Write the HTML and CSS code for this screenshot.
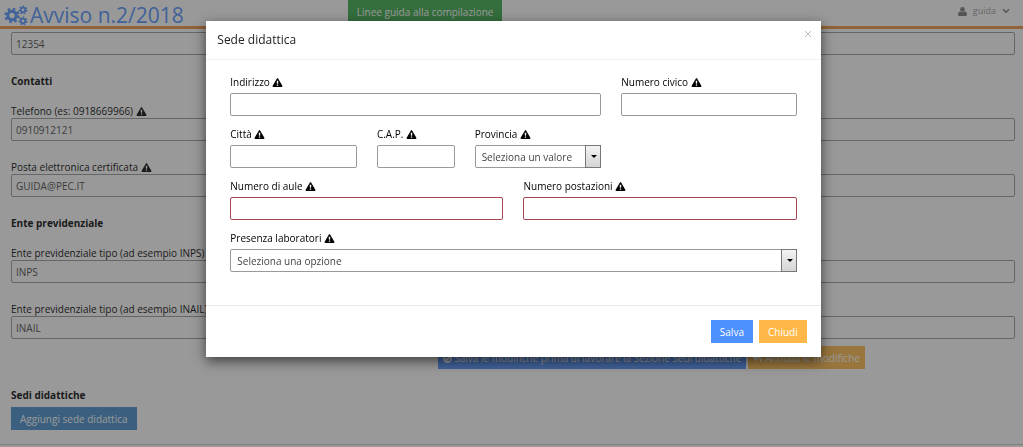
FILE: index.html
```html
<!DOCTYPE html>
<html lang="it">
<head>
<meta charset="utf-8">
<meta name="viewport" content="width=device-width, initial-scale=1">
<title>Avviso n.2/2018</title>
<link rel="stylesheet" href="styles.css">
</head>
<body>
<svg class="sprite" aria-hidden="true">
  <symbol id="warn" viewBox="0 0 20 18"><path fill-rule="evenodd" d="M8.8.9Q10-.6 11.2.9L19.7 15.600Q20.300 17.800 18.300 18H1.700Q-.3 17.800.3 15.600ZM8.400 5.500 8.800 11.500H11.200L11.600 5.500ZM8.700 13V15.500H11.300V13Z"/></symbol>
</svg>

<header class="topbar">
  <h1 class="brand">
    <svg class="brand-icon" viewBox="0 0 24 21" aria-hidden="true">
      <g fill="none" stroke="currentColor">
        <circle cx="8" cy="10.500" r="4.200" stroke-width="3"/>
        <circle cx="8" cy="10.500" r="6.500" stroke-width="2.400" stroke-dasharray="2.550 2.550"/>
        <circle cx="19" cy="5" r="2.300" stroke-width="1.700"/>
        <circle cx="19" cy="5" r="3.700" stroke-width="1.500" stroke-dasharray="1.660 1.660"/>
        <circle cx="19" cy="16" r="2.300" stroke-width="1.700"/>
        <circle cx="19" cy="16" r="3.700" stroke-width="1.500" stroke-dasharray="1.660 1.660"/>
      </g>
    </svg>
    <span>Avviso n.2/2018</span>
  </h1>
  <button class="btn btn-green guide" type="button">Linee guida alla compilazione</button>
  <button class="user" type="button">
    <svg class="user-icon" viewBox="0 0 10 10" aria-hidden="true"><circle cx="5" cy="2.700" r="2.600"/><path d="M2.500 4.800Q5 7 7.500 4.800Q10 5.300 10 8.500Q10 10 8.500 10H1.500Q0 10 0 8.500Q0 5.300 2.500 4.800Z"/></svg>
    <span>guida</span>
    <svg class="chevron" viewBox="0 0 8 6" aria-hidden="true"><path d="M1 1.200 4 4.200 7 1.200"/></svg>
  </button>
</header>

<main class="page">
  <input class="control" type="text" value="12354" aria-label="Codice">

  <h2 class="section">Contatti</h2>
  <div class="group">
    <label for="tel">Telefono (es: 0918669966) <svg class="warn"><use href="#warn"/></svg></label>
    <input class="control" id="tel" type="text" value="0910912121">
  </div>
  <div class="group">
    <label for="pec">Posta elettronica certificata <svg class="warn"><use href="#warn"/></svg></label>
    <input class="control" id="pec" type="text" value="GUIDA@PEC.IT">
  </div>

  <h2 class="section">Ente previdenziale</h2>
  <div class="group">
    <label for="inps">Ente previdenziale tipo (ad esempio INPS) e sede <svg class="warn"><use href="#warn"/></svg></label>
    <input class="control" id="inps" type="text" value="INPS">
  </div>
  <div class="group">
    <label for="inail">Ente previdenziale tipo (ad esempio INAIL) e sede <svg class="warn"><use href="#warn"/></svg></label>
    <input class="control" id="inail" type="text" value="INAIL">
  </div>

  <div class="actions">
    <button class="btn btn-blue" type="button"><svg class="btn-icon" viewBox="0 0 10 10" aria-hidden="true"><circle cx="5" cy="5" r="4"/><path d="M3 5 4.500 6.500 7.200 3.500"/></svg> Salva le modifiche prima di lavorare la Sezione Sedi didattiche</button>
    <button class="btn btn-yellow" type="button"><svg class="btn-icon" viewBox="0 0 10 10" aria-hidden="true"><path d="M4 1 1 4 4 7M1 4H6Q9 4 9 8"/></svg> Annulla le modifiche</button>
  </div>

  <h2 class="section section-sites">Sedi didattiche</h2>
  <button class="btn btn-primary" type="button">Aggiungi sede didattica</button>
</main>
<hr class="page-end">

<div class="backdrop">
  <form class="modal" role="dialog" aria-modal="true" aria-labelledby="modal-title">
    <header class="modal-head">
      <h2 class="modal-title" id="modal-title">Sede didattica</h2>
      <button class="close" type="button" aria-label="Chiudi finestra"><svg viewBox="0 0 8 8" aria-hidden="true"><path d="M1 1 7 7M7 1 1 7"/></svg></button>
    </header>
    <div class="modal-body">
      <div class="field span-8">
        <label for="ind">Indirizzo <svg class="warn"><use href="#warn"/></svg></label>
        <input class="control" id="ind" type="text">
      </div>
      <div class="field span-4">
        <label for="civ">Numero civico <svg class="warn"><use href="#warn"/></svg></label>
        <input class="control" id="civ" type="text">
      </div>
      <div class="field span-3">
        <label for="citta">Città <svg class="warn"><use href="#warn"/></svg></label>
        <input class="control" id="citta" type="text">
      </div>
      <div class="field span-2">
        <label for="cap">C.A.P. <svg class="warn"><use href="#warn"/></svg></label>
        <input class="control" id="cap" type="text">
      </div>
      <div class="field span-3">
        <label for="prov">Provincia <svg class="warn"><use href="#warn"/></svg></label>
        <div class="select"><select class="control" id="prov"><option>Seleziona un valore</option></select></div>
      </div>
      <div class="field span-6 row-start">
        <label for="aule">Numero di aule <svg class="warn"><use href="#warn"/></svg></label>
        <input class="control invalid" id="aule" type="text">
      </div>
      <div class="field span-6">
        <label for="post">Numero postazioni <svg class="warn"><use href="#warn"/></svg></label>
        <input class="control invalid" id="post" type="text">
      </div>
      <div class="field span-12">
        <label for="lab">Presenza laboratori <svg class="warn"><use href="#warn"/></svg></label>
        <div class="select"><select class="control" id="lab"><option>Seleziona una opzione</option></select></div>
      </div>
    </div>
    <footer class="modal-foot">
      <button class="btn btn-blue" type="button">Salva</button>
      <button class="btn btn-yellow" type="button">Chiudi</button>
    </footer>
  </form>
</div>
</body>
</html>
```
FILE: styles.css
```css
* { box-sizing: border-box; }

body {
  margin: 0;
  background: #fff;
  color: #000;
  font: 10px/14px "Open Sans", "Noto Sans", sans-serif;
  overflow: hidden;
}

button, input, select { font: inherit; }

.sprite { position: absolute; width: 0; height: 0; }

/* Top bar */
.topbar {
  display: grid;
  grid-template-columns: 34% 1fr auto;
  align-items: start;
  height: 29px;
  border-bottom: 3px solid #f0923c;
}

.brand {
  display: flex;
  align-items: center;
  gap: 2px;
  margin: 0;
  padding: 2px 0 0 4px;
  color: #4d90fe;
  font-size: 21px;
  font-weight: 400;
  line-height: 26px;
  white-space: nowrap;
}

.brand-icon { width: 24px; height: 21px; }

.guide { justify-self: start; }

.user {
  display: flex;
  align-items: center;
  gap: 6px;
  padding: 4px 13px 0 0;
  border: 0;
  background: none;
  color: #999;
  font-size: 9px;
  line-height: 14px;
}

.user-icon { width: 9px; height: 9px; fill: #777; }

.chevron {
  width: 8px;
  height: 6px;
  fill: none;
  stroke: #777;
  stroke-width: 1.5;
}

/* Page form */
.page { padding: 3px 8px 0 11px; }

.group + .group { margin-top: 19px; }

label { display: block; white-space: nowrap; }

.warn {
  width: 11px;
  height: 9px;
  vertical-align: -1px;
}

.control {
  display: block;
  width: 100%;
  height: 23px;
  padding: 0 4px;
  border: 1px solid #999;
  border-radius: 2px;
  background: #fff;
  color: #444;
}

.control.invalid { border-color: #a94452; }

.section {
  margin: 19px 0 16px;
  font-size: 10px;
  font-weight: 700;
}

.section-sites { margin-bottom: 5px; }

.actions {
  display: flex;
  gap: 2px;
  margin-top: 7px;
  padding-left: 42.5%;
}

.btn {
  height: 23px;
  padding: 0 9px;
  border: 0;
  color: #fff;
  white-space: nowrap;
}

.actions .btn { padding: 0 5px; }

.btn-green { background: #35aa47; }
.btn-blue { background: #4d90fe; }
.btn-yellow { background: #ffb848; }
.btn-primary { background: #428bca; }

.btn-icon {
  width: 9px;
  height: 9px;
  vertical-align: -1px;
  fill: none;
  stroke: #fff;
  stroke-width: 2;
}

.page-end {
  height: 1px;
  margin: 14px 0 0;
  border: 0;
  background: #ccc;
}

/* Modal */
.backdrop {
  position: fixed;
  inset: 0;
  padding: 21px 0 0 4px;
  background: rgba(51, 51, 51, .5);
}

.modal {
  width: calc(60% + 3px);
  margin: 0 auto;
  background: #fff;
  box-shadow: 0 4px 12px rgba(0, 0, 0, .6);
}

.modal-head {
  display: flex;
  justify-content: space-between;
  align-items: flex-start;
  padding: 9px 9px 9px 11px;
  border-bottom: 1px solid #efefef;
}

.modal-title {
  margin: 0;
  color: #222;
  font-size: 12px;
  font-weight: 400;
  line-height: 20px;
}

.close {
  display: flex;
  padding: 0;
  border: 0;
  background: none;
}

.close svg {
  width: 8px;
  height: 8px;
  fill: none;
  stroke: #bbb;
  stroke-width: 1;
}

.modal-body {
  display: grid;
  grid-template-columns: repeat(12, 1fr);
  gap: 11px 20px;
  padding: 15px 24px 33px;
}

.field { min-width: 0; }
.field label { margin-bottom: 4px; }
.span-2 { grid-column: span 2; }
.span-3 { grid-column: span 3; }
.span-4 { grid-column: span 4; }
.span-6 { grid-column: span 6; }
.row-start { grid-column: 1 / span 6; }
.span-8 { grid-column: span 8; }
.span-12 { grid-column: span 12; }

.select { position: relative; }

.select .control {
  appearance: none;
  padding: 0 18px 0 6px;
}

.select::before {
  content: "";
  position: absolute;
  top: 0;
  right: 0;
  bottom: 0;
  width: 14px;
  border: 1px solid #777;
  background: linear-gradient(#f4f4f4, #d4d4d4);
  pointer-events: none;
}

.select::after {
  content: "";
  position: absolute;
  top: 10px;
  right: 4px;
  border: 3px solid transparent;
  border-top-color: #000;
  border-bottom: 0;
  pointer-events: none;
}

.modal-foot {
  display: flex;
  justify-content: flex-end;
  gap: 6px;
  padding: 14px;
  border-top: 1px solid #e8eaea;
}
```
